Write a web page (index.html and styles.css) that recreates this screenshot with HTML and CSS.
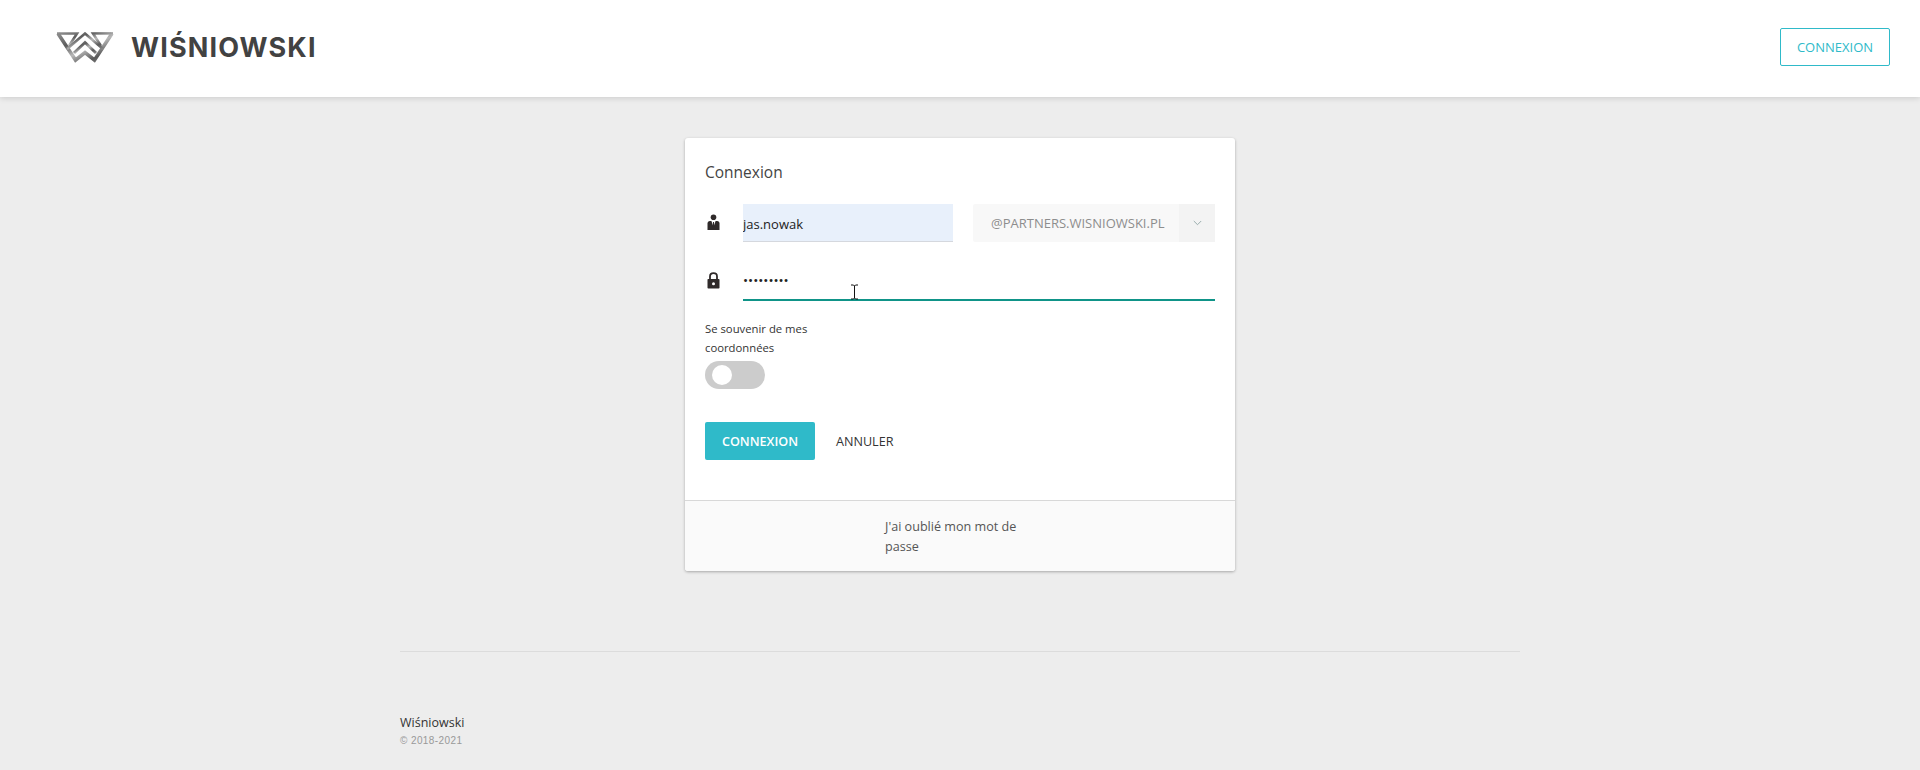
FILE: index.html
```html
<!DOCTYPE HTML>
<html>
<head>
  <title>Connexion</title>
  <meta name="viewport" content="width=device-width, initial-scale=1">
  <link rel="stylesheet" href="styles.css">
</head>

<body>

<header class="topbar">
  <div class="brand">
    <svg class="brand-mark" width="58" height="31" viewBox="0 0 58 31">
      <defs>
        <linearGradient id="silver" x1="0" y1="0" x2="1" y2="1">
          <stop offset="0" stop-color="#8f8f8f"/>
          <stop offset="0.3" stop-color="#5c5c5c"/>
          <stop offset="0.55" stop-color="#b8b8b8"/>
          <stop offset="0.8" stop-color="#5a5a5a"/>
          <stop offset="1" stop-color="#8a8a8a"/>
        </linearGradient>
      </defs>
      <path d="M2 1.5 L19.5 28 L29 20.5 L38.5 28 L56 1.5" fill="none" stroke="url(#silver)" stroke-width="3.6"/>
      <path d="M1 1.5 H21 L13 14 M57 1.5 H37 L45 14" fill="none" stroke="url(#silver)" stroke-width="2.6"/>
      <path d="M11 17 L29 1.5 L47 17" fill="none" stroke="url(#silver)" stroke-width="2.6"/>
      <path d="M18 21 L29 10.5 L40 21" fill="none" stroke="url(#silver)" stroke-width="3"/>
    </svg>
    <span class="brand-name">WIŚNIOWSKI</span>
  </div>
  <button class="btn btn-outline">CONNEXION</button>
</header>

<main class="page">
  <section class="card">
    <div class="card-body">
      <h1 class="card-title">Connexion</h1>

      <div class="field">
        <svg class="field-icon" width="13" height="17" viewBox="0 0 13 17">
          <circle cx="6.5" cy="3.2" r="2.8" fill="#2f2a2a"/>
          <path d="M0.5 16 V9.5 Q0.5 7 3 7 H10 Q12.5 7 12.5 9.5 V16 Z" fill="#2f2a2a"/>
          <path d="M4.4 7 L6.5 13 L8.6 7 Z" fill="#fff"/>
          <path d="M6 8 H7 L7.3 12 L6.5 14.5 L5.7 12 Z" fill="#2f2a2a"/>
        </svg>
        <div class="login-row">
          <input class="input input-filled" type="text" value="jas.nowak">
          <div class="domain">
            <span class="domain-text">@PARTNERS.WISNIOWSKI.PL</span>
            <span class="domain-arrow">
              <svg width="9" height="6" viewBox="0 0 9 6"><path d="M0.8 1 L4.5 4.7 L8.2 1" fill="none" stroke="#8fa5a5" stroke-width="0.9"/></svg>
            </span>
          </div>
        </div>
      </div>

      <div class="field field-pass">
        <svg class="field-icon" width="13" height="17" viewBox="0 0 13 17">
          <path d="M3 7 V4.5 Q3 1.2 6.5 1.2 Q10 1.2 10 4.5 V7" fill="none" stroke="#2f2a2a" stroke-width="1.8"/>
          <rect x="0.5" y="7" width="12" height="9.5" rx="0.8" fill="#2f2a2a"/>
          <circle cx="6.5" cy="11.7" r="1.5" fill="#fff"/>
        </svg>
        <input class="input input-active" type="password" value="123456789">
      </div>

      <div class="remember">
        <label class="remember-label">Se souvenir de mes coordonnées</label>
        <span class="toggle"><span class="toggle-knob"></span></span>
      </div>

      <div class="actions">
        <button class="btn btn-primary">CONNEXION</button>
        <button class="btn btn-text">ANNULER</button>
      </div>
    </div>

    <div class="card-foot">
      <a class="forgot" href="#">J'ai oublié mon mot de passe</a>
    </div>
  </section>

  <footer class="footer">
    <div class="footer-name">Wiśniowski</div>
    <div class="footer-copy">© 2018-2021</div>
  </footer>
</main>

<!-- mouse pointer caught in the screenshot -->
<svg class="pointer" width="9" height="16" viewBox="0 0 9 16">
  <path d="M1 1 H3.5 L4.5 2 L5.5 1 H8 M4.5 2 V14 M1 15 H3.5 L4.5 14 L5.5 15 H8" fill="none" stroke="#111" stroke-width="1"/>
</svg>

</body>
</html>
```

FILE: styles.css
```css
* {
  box-sizing: border-box;
}

html, body {
  height: 100%;
}

body {
  margin: 0;
  background-color: #ededed;
  font-family: "Open Sans", "Liberation Sans", sans-serif;
  color: #333;
  overflow: hidden;
  position: relative;
}

.topbar {
  height: 97px;
  background-color: #fff;
  box-shadow: 0 1px 6px rgba(0, 0, 0, 0.15);
  padding: 0 30px 3px 56px;
  display: flex;
  align-items: center;
  justify-content: space-between;
}

.brand {
  display: flex;
  align-items: center;
  gap: 17px;
}

.brand-name {
  font-family: Inter, "Open Sans", sans-serif;
  font-size: 27px;
  font-weight: 700;
  letter-spacing: 1.15px;
  color: #424242;
}

.btn {
  border: 1px solid transparent;
  border-radius: 2px;
  font-family: inherit;
  font-size: 12.6px;
  cursor: pointer;
  background-color: transparent;
}

.btn-outline {
  width: 110px;
  height: 38px;
  border-color: #2fbac9;
  color: #2fbac9;
  background-color: #fff;
  font-size: 13px;
}

.btn-primary {
  width: 110px;
  height: 38px;
  background-color: #2fbac9;
  color: #fff;
  font-weight: 600;
}

.btn-text {
  color: #333;
  padding: 0;
  margin-left: 20px;
}

.page {
  display: flex;
  flex-direction: column;
  align-items: center;
  padding-top: 41px;
}

.card {
  width: 550px;
  height: 433px;
  background-color: #fff;
  border-radius: 3px;
  box-shadow: 0 1px 3px rgba(0, 0, 0, 0.3);
  display: flex;
  flex-direction: column;
}

.card-body {
  flex: 1;
  padding: 22px 20px 0 20px;
}

.card-title {
  margin: 0 0 20px 0;
  font-size: 15.5px;
  line-height: 24px;
  font-weight: 400;
  color: #444;
}

.field {
  display: flex;
  align-items: center;
}

.field-icon {
  width: 13px;
  margin: -2px 23px 0 2px;
  flex: none;
}

.field-pass {
  margin-top: 20px;
  align-items: flex-start;
}

.field-pass .field-icon {
  margin-top: 10px;
}

.login-row {
  flex: 1;
  display: flex;
  gap: 20px;
}

.input {
  border: 0;
  outline: 0;
  padding: 0;
  font-family: inherit;
  font-size: 13px;
  color: #222;
  background-color: transparent;
}

.input-filled {
  width: 210px;
  height: 38px;
  padding-top: 2px;
  background-color: #e8f0fb;
  border-bottom: 1px solid #d5d8de;
}

.input-active {
  flex: 1;
  height: 39px;
  border-bottom: 2px solid #0f9488;
  padding-bottom: 2px;
  font-size: 13.5px;
}

.domain {
  flex: 1;
  height: 38px;
  display: flex;
  background-color: #f8f8f8;
  border-radius: 2px;
  color: #8d8d8d;
  font-size: 13px;
}

.domain-text {
  flex: 1;
  display: flex;
  align-items: center;
  padding-left: 18px;
}

.domain-arrow {
  width: 36px;
  display: flex;
  align-items: center;
  justify-content: center;
  background-color: #f3f3f3;
}

.remember {
  margin-top: 19px;
}

.remember-label {
  display: block;
  width: 120px;
  font-size: 11.3px;
  line-height: 18.5px;
}

.toggle {
  display: block;
  width: 60px;
  height: 28px;
  margin-top: 4px;
  padding: 4px 7px;
  background-color: #ccc;
  border-radius: 14px;
}

.toggle-knob {
  display: block;
  width: 20px;
  height: 20px;
  background-color: #fff;
  border-radius: 50%;
}

.actions {
  margin-top: 33px;
  display: flex;
  align-items: center;
}

.card-foot {
  height: 71px;
  padding: 16px 0 0 200px;
  background-color: #fafafa;
  border-top: 1px solid #d8d8d8;
  border-radius: 0 0 3px 3px;
}

.forgot {
  display: block;
  width: 140px;
  font-size: 12.6px;
  line-height: 19.5px;
  color: #555;
  text-decoration: none;
}

.footer {
  width: 1120px;
  margin-top: 80px;
  padding-top: 61px;
  border-top: 1px solid #dcdcdc;
}

.footer-name {
  font-size: 12.5px;
  line-height: 20px;
}

.footer-copy {
  margin-top: 2px;
  font-family: "Liberation Sans", sans-serif;
  font-size: 10px;
  color: #999;
  letter-spacing: 0.4px;
}

.pointer {
  position: absolute;
  left: 850px;
  top: 284px;
}
```
